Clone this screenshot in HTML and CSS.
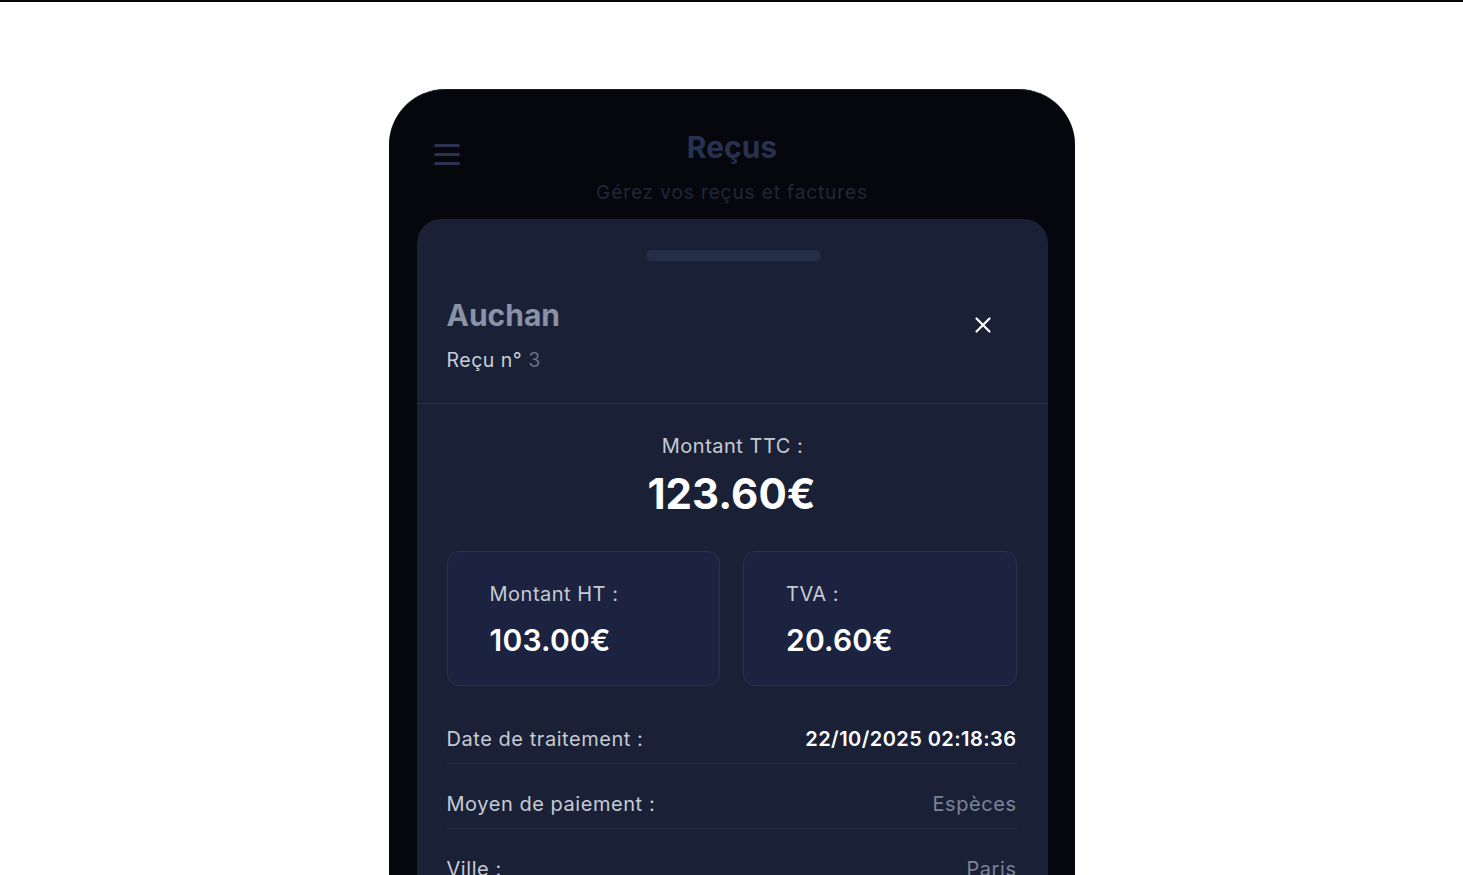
FILE: index.html
```html
<!DOCTYPE html>
<html lang="fr">
<head>
<meta charset="utf-8">
<title>Reçus</title>
<link rel="stylesheet" href="styles.css">
</head>
<body>
<div class="topline"></div>
<main class="stage">
  <div class="phone">
    <header class="appbar">
      <button class="menu" aria-label="Menu">
        <span></span><span></span><span></span>
      </button>
      <div class="titles">
        <h1 class="title">Reçus</h1>
        <p class="subtitle">Gérez vos reçus et factures</p>
      </div>
    </header>
    <section class="sheet">
      <div class="handle"></div>
      <div class="sheet-head">
        <div class="head-text">
          <h2 class="store">Auchan</h2>
          <p class="receipt-no">Reçu n° <span class="num">3</span></p>
        </div>
        <button class="close" aria-label="Fermer">
          <svg width="18" height="18" viewBox="0 0 18 18"><path d="M2.5 2.5 L15.5 15.5 M15.5 2.5 L2.5 15.5" stroke="#ffffff" stroke-width="2.2" stroke-linecap="round" fill="none"/></svg>
        </button>
      </div>
      <div class="sheet-body">
        <div class="total">
          <p class="total-label">Montant TTC :</p>
          <p class="total-value">123.60€</p>
        </div>
        <div class="cards">
          <div class="card">
            <p class="card-label">Montant HT :</p>
            <p class="card-value">103.00€</p>
          </div>
          <div class="card">
            <p class="card-label">TVA :</p>
            <p class="card-value">20.60€</p>
          </div>
        </div>
        <div class="rows">
          <div class="row">
            <span class="row-label">Date de traitement :</span>
            <span class="row-value strong">22/10/2025 02:18:36</span>
          </div>
          <div class="row">
            <span class="row-label">Moyen de paiement :</span>
            <span class="row-value muted">Espèces</span>
          </div>
          <div class="row">
            <span class="row-label">Ville :</span>
            <span class="row-value muted">Paris</span>
          </div>
        </div>
      </div>
    </section>
  </div>
</main>
</body>
</html>
```
FILE: styles.css
```css
* { box-sizing: border-box; }
html, body { margin: 0; padding: 0; background: #ffffff; overflow: hidden; }
body { font-family: Inter, "Noto Sans", "Liberation Sans", sans-serif; height: 875px; }
p, h1, h2 { margin: 0; }
button { font: inherit; background: none; border: 0; padding: 0; cursor: pointer; }

.topline { height: 2px; background: #05070c; }

.stage {
  display: flex;
  justify-content: center;
  padding-top: 87px;
}

.phone {
  width: 686px;
  height: 900px;
  background: #05070d;
  border-radius: 56px 56px 0 0;
  border-top: 1px solid #151b2a;
  padding: 0 27px 0 28px;
  display: flex;
  flex-direction: column;
}

.appbar {
  height: 129px;
  display: flex;
}

.menu {
  width: 28px;
  display: flex;
  flex-direction: column;
  gap: 6px;
  margin: 54px 0 0 17px;
  align-self: flex-start;
}
.menu span {
  display: block;
  height: 3px;
  width: 26px;
  border-radius: 2px;
  background: #2a3450;
}

.titles {
  flex: 1;
  display: flex;
  flex-direction: column;
  align-items: center;
  padding-right: 45px;
  padding-top: 39px;
}
.title {
  font-size: 30px;
  line-height: 36px;
  font-weight: 700;
  color: #263250;
}
.subtitle {
  margin-top: 16px;
  font-size: 19px;
  line-height: 24px;
  letter-spacing: 0.9px;
  color: #202737;
}

.sheet {
  flex: 1;
  background: #1a2137;
  border-radius: 24px 24px 0 0;
  display: flex;
  flex-direction: column;
}

.handle {
  align-self: center;
  width: 175px;
  height: 11px;
  border-radius: 6px;
  background: #242e48;
  margin-top: 31px;
  margin-left: 2px;
}

.sheet-head {
  display: flex;
  justify-content: space-between;
  align-items: flex-start;
  padding: 36px 45px 31px 30px;
  border-bottom: 1px solid #283249;
}
.store {
  font-size: 30px;
  line-height: 36px;
  font-weight: 700;
  color: #8a92a5;
}
.receipt-no {
  margin-top: 15px;
  font-size: 19.5px;
  line-height: 24px;
  letter-spacing: 0.5px;
  color: #c9cdd6;
}
.receipt-no .num { color: #687084; }

.close {
  width: 40px;
  height: 40px;
  display: flex;
  align-items: center;
  justify-content: center;
  margin-top: 8px;
}
.close svg { width: 18px; height: 18px; }

.sheet-body {
  padding: 30px 31px 0 30px;
}

.total {
  display: flex;
  flex-direction: column;
  align-items: center;
}
.total-label {
  font-size: 20px;
  line-height: 24px;
  letter-spacing: 0.5px;
  color: #c6cad3;
  margin-left: 2px;
}
.total-value {
  margin-top: 11px;
  font-size: 42px;
  line-height: 50px;
  font-weight: 700;
  color: #ffffff;
}

.cards {
  margin-top: 32px;
  display: grid;
  grid-template-columns: 1fr 1fr;
  gap: 23px;
}
.card {
  height: 135px;
  border: 1.5px solid #29324d;
  border-radius: 12px;
  background: #1b2340;
  padding: 30px 20px 0 42px;
}
.card-label {
  font-size: 20px;
  line-height: 24px;
  letter-spacing: 0.5px;
  color: #c6cad3;
}
.card-value {
  margin-top: 16px;
  font-size: 30px;
  line-height: 36px;
  font-weight: 600;
  letter-spacing: 0.2px;
  color: #ffffff;
}

.rows { margin-top: 13px; }
.row {
  display: flex;
  justify-content: space-between;
  align-items: center;
  padding: 28px 0 12px;
  border-bottom: 1.5px solid #263049;
  font-size: 20px;
  line-height: 24px;
  letter-spacing: 0.55px;
}
.row-label { color: #c6cad3; }
.row-value.strong { color: #ffffff; font-weight: 600; letter-spacing: 0.45px; }
.row-value.muted { color: #7a8296; }
```
